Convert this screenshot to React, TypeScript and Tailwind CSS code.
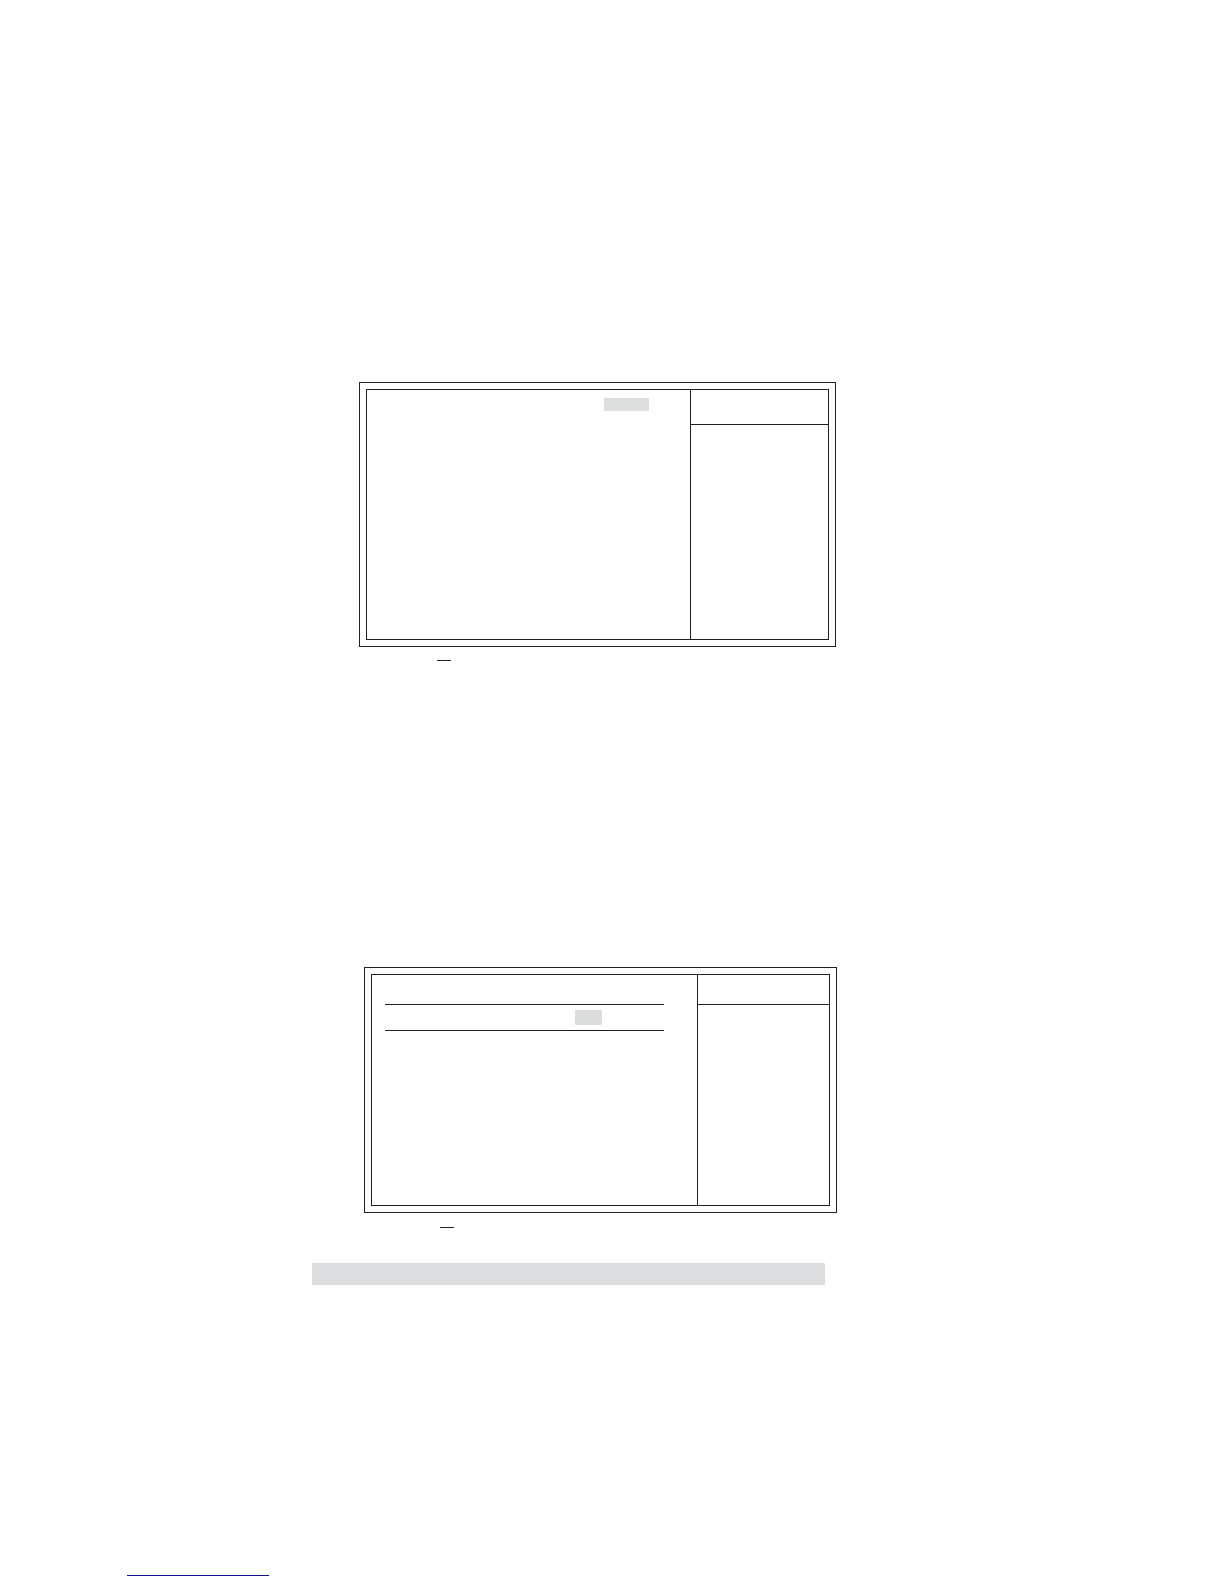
import type { ReactNode } from "react";

function Frame({ children }: { children: ReactNode }) {
  return (
    <div className="col-start-2 border border-[#231f20] p-1.5">
      {children}
    </div>
  );
}

function SideColumn({ header, body }: { header: string; body: string }) {
  return (
    <aside className="border-l border-[#231f20]">
      <div className={"border-b border-[#231f20] " + header} />
      <div className={body} />
    </aside>
  );
}

export default function App() {
  return (
    <main className="min-h-screen bg-white pt-[382px] pb-2">
      {/* Upper screen: one highlighted value and a help column */}
      <section>
        <div className="grid grid-cols-[359fr_477fr_388fr]">
          <Frame>
            <div className="grid grid-cols-[323fr_138fr] border border-[#231f20]">
              <div className="grid grid-cols-[237fr_45fr_41fr] pt-2">
                <div className="col-start-2 h-[13px] rounded-r-[1px] bg-[#dcdddd]" />
              </div>
              <SideColumn header="h-[35px]" body="h-[214px]" />
            </div>
          </Frame>
        </div>
        <div className="mt-[13px] grid grid-cols-[437fr_14fr_773fr]">
          <div className="col-start-2 h-px bg-[#231f20]" />
        </div>
      </section>

      {/* Lower screen: ruled row with a highlighted value */}
      <section className="mt-[306px]">
        <div className="grid grid-cols-[364fr_473fr_387fr]">
          <Frame>
            <div className="grid grid-cols-[325fr_132fr] border border-[#231f20]">
              <div className="grid grid-cols-[13fr_279fr_33fr] content-start pt-[29px]">
                <div className="col-start-2 grid grid-cols-[190fr_27fr_62fr] border-y border-[#231f20] py-[5px]">
                  <div className="col-start-2 h-[15px] rounded-[1px] bg-[#dbdddd]" />
                </div>
              </div>
              <SideColumn header="h-[30px]" body="h-[200px]" />
            </div>
          </Frame>
        </div>
        <div className="mt-[14px] grid grid-cols-[440fr_14fr_770fr]">
          <div className="col-start-2 h-px bg-[#231f20]" />
        </div>
      </section>

      {/* Section band */}
      <div className="mt-[35px] grid grid-cols-[312fr_513fr_399fr]">
        <div className="col-start-2 h-[22px] rounded-r-[1px] bg-[#dcdddf]" />
      </div>

      {/* Footer link */}
      <footer className="mt-[270px] grid grid-cols-[127fr_142fr_955fr]">
        <a
          href="#top"
          aria-label="Back to top"
          className="col-start-2 block h-[21px] border-b border-[#12128f]"
        />
      </footer>
    </main>
  );
}
